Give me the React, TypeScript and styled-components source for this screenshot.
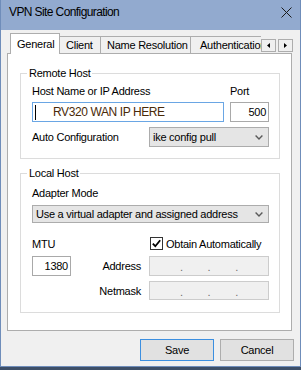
import React from 'react';
import styled, { createGlobalStyle } from 'styled-components';

const GlobalStyle = createGlobalStyle`
  html, body { margin: 0; padding: 0; }
  body {
    background: #3d4f68;
    font-family: "Liberation Sans", Arial, sans-serif;
    font-size: 11px;
    letter-spacing: -0.25px;
    color: #000;
  }
`;

// --- window chrome ---
const Window = styled.div`
  width: 301px;
  height: 367px;
  box-sizing: border-box;
  display: flex;
  flex-direction: column;
  background: #f0f0f0;
  border: 1px solid #6f8dba;
  border-top: none;
`;

const TitleBar = styled.div`
  height: 30px;
  flex-shrink: 0;
  display: flex;
  align-items: flex-start;
  background: #92aacf;
`;

const TitleText = styled.div`
  padding: 5px 0 0 8px;
  font-size: 12px;
  line-height: 14px;
  letter-spacing: -0.6px;
`;

const CloseIcon = styled.svg`
  margin: 7px 8px 0 auto;
  flex-shrink: 0;
`;

const Body = styled.div`
  flex: 1;
  display: flex;
  flex-direction: column;
  padding: 3px 0 0 6px;
`;

// --- tabs ---
const TabStrip = styled.div`
  display: flex;
  width: 286px;
  height: 21px;
  position: relative;
  z-index: 1;
  margin-bottom: -1px;
`;

const TabList = styled.div`
  flex: 1;
  min-width: 0;
  display: flex;
  align-items: flex-end;
  overflow: hidden;
  padding-left: 3px;
`;

const Tab = styled.div<{ $active?: boolean; $w: number; $pad: number }>`
  flex-shrink: 0;
  box-sizing: border-box;
  width: ${p => p.$w}px;
  height: ${p => (p.$active ? 21 : 17)}px;
  margin-bottom: ${p => (p.$active ? 0 : 1)}px;
  border: 1px solid #adadad;
  border-bottom: none;
  background: ${p => (p.$active ? '#ffffff' : '#f0f0f0')};
  display: flex;
  align-items: center;
  padding-left: ${p => p.$pad}px;
  white-space: nowrap;
  & + & { margin-left: -1px; }
`;

const Arrows = styled.div`
  display: flex;
  gap: 2px;
  margin-top: 6px;
  align-self: flex-start;
`;

const ArrowButton = styled.div`
  width: 15px;
  height: 13px;
  box-sizing: border-box;
  border: 1px solid #adadad;
  background: #f0f0f0;
  display: flex;
  align-items: center;
  justify-content: center;
`;

const Panel = styled.div`
  width: 285px;
  height: 278px;
  box-sizing: border-box;
  border: 1px solid #adadad;
  background: #ffffff;
  padding: 12px 11px 0 12px;
  display: flex;
  flex-direction: column;
  gap: 7px;
`;

// --- group boxes ---
const Group = styled.fieldset`
  margin: 0;
  padding: 0;
  min-width: 0;
  border: 1px solid #dcdcdc;
`;

const Legend = styled.legend`
  margin-left: 6px;
  padding: 0 2px;
  line-height: 14px;
`;

const GroupBody = styled.div<{ $top: number; $bottom: number }>`
  display: flex;
  flex-direction: column;
  padding: ${p => p.$top}px 10px ${p => p.$bottom}px 11px;
`;

const Label = styled.div`
  line-height: 14px;
  white-space: nowrap;
`;

const FieldRow = styled.div`
  display: flex;
  gap: 6px;
`;

const FieldColumn = styled.div<{ $w?: number }>`
  display: flex;
  flex-direction: column;
  gap: 4px;
  ${p => (p.$w ? `width: ${p.$w}px; flex-shrink: 0;` : 'flex: 1;')}
`;

const TextBox = styled.div<{ $focus?: boolean; $right?: boolean }>`
  height: 20px;
  box-sizing: border-box;
  border: 1px solid ${p => (p.$focus ? '#6aa6e4' : '#a9a9a9')};
  background: #ffffff;
  display: flex;
  align-items: center;
  justify-content: ${p => (p.$right ? 'flex-end' : 'flex-start')};
  padding: 0 2px;
  line-height: 14px;
`;

const Caret = styled.span`
  width: 1px;
  height: 15px;
  background: #000;
  flex-shrink: 0;
`;

const HostText = styled.span`
  margin-left: 17px;
  font-size: 12px;
  letter-spacing: -0.4px;
  color: #4a2a08;
  white-space: nowrap;
`;

const OptionRow = styled.div`
  display: flex;
  align-items: center;
  justify-content: space-between;
  margin-top: 5px;
`;

const Select = styled.div<{ $w?: number; $h: number; $gap?: number }>`
  ${p => (p.$w ? `width: ${p.$w}px;` : '')}
  height: ${p => p.$h}px;
  margin-top: ${p => p.$gap ?? 0}px;
  box-sizing: border-box;
  border: 1px solid #acacac;
  background: #e5e5e5;
  display: flex;
  align-items: center;
  justify-content: space-between;
  padding: 0 5px 0 3px;
  white-space: nowrap;
`;

const LocalGrid = styled.div`
  display: grid;
  grid-template-columns: 39px 62px 120px;
  grid-template-rows: 15px 20px 19px;
  column-gap: 8px;
  row-gap: 5px;
  margin-top: 13px;
  align-items: center;
`;

const RightLabel = styled(Label)`
  justify-self: end;
`;

const CheckRow = styled.div`
  display: flex;
  align-items: center;
  gap: 3px;
  margin-left: 1px;
  white-space: nowrap;
`;

const IpBox = styled.div<{ $h: number }>`
  height: ${p => p.$h}px;
  box-sizing: border-box;
  border: 1px solid #cccccc;
  background: #f0f0f0;
  display: flex;
  align-items: center;
  justify-content: space-between;
  padding: 2px 30px 0 30px;
  color: #6d6d6d;
`;

// --- dialog buttons ---
const ButtonRow = styled.div`
  display: flex;
  justify-content: flex-end;
  gap: 6px;
  padding: 8px 6px 0 0;
`;

const Button = styled.button<{ $primary?: boolean }>`
  width: 74px;
  height: 22px;
  box-sizing: border-box;
  border: 1px solid ${p => (p.$primary ? '#3c8fe0' : '#adadad')};
  background: #e1e1e1;
  font-family: inherit;
  font-size: 11px;
  letter-spacing: -0.25px;
  color: #000;
  padding: 0;
`;

const Chevron = () => (
  <svg width="8" height="5" viewBox="0 0 8 5">
    <polyline points="0.6,0.6 4,4 7.4,0.6" fill="none" stroke="#5a5a5a" strokeWidth="1.4" />
  </svg>
);

const IpDots = ({ h }: { h: number }) => (
  <IpBox $h={h}>
    <span>.</span>
    <span>.</span>
    <span>.</span>
  </IpBox>
);

const tabs = [
  { label: 'General', w: 50, pad: 6, active: true },
  { label: 'Client', w: 42, pad: 6 },
  { label: 'Name Resolution', w: 91, pad: 6 },
  { label: 'Authentication', w: 95, pad: 9 },
];

export default function App() {
  return (
    <>
      <GlobalStyle />
      <Window>
        <TitleBar>
          <TitleText>VPN Site Configuration</TitleText>
          <CloseIcon width="11" height="11" viewBox="0 0 11 11">
            <path d="M0.5 0.5 L10.5 10.5 M10.5 0.5 L0.5 10.5" stroke="#1a1a1a" strokeWidth="1" />
          </CloseIcon>
        </TitleBar>

        <Body>
          <TabStrip>
            <TabList>
              {tabs.map(t => (
                <Tab key={t.label} $w={t.w} $pad={t.pad} $active={t.active}>{t.label}</Tab>
              ))}
            </TabList>
            <Arrows>
              <ArrowButton>
                <svg width="3" height="5" viewBox="0 0 3 5"><polygon points="3,0 0,2.5 3,5" fill="#000" /></svg>
              </ArrowButton>
              <ArrowButton>
                <svg width="3" height="5" viewBox="0 0 3 5"><polygon points="0,0 3,2.5 0,5" fill="#000" /></svg>
              </ArrowButton>
            </Arrows>
          </TabStrip>

          <Panel>
            <Group>
              <Legend>Remote Host</Legend>
              <GroupBody $top={4} $bottom={11}>
                <FieldRow>
                  <FieldColumn>
                    <Label>Host Name or IP Address</Label>
                    <TextBox $focus>
                      <Caret />
                      <HostText>RV320 WAN IP HERE</HostText>
                    </TextBox>
                  </FieldColumn>
                  <FieldColumn $w={39}>
                    <Label>Port</Label>
                    <TextBox $right>500</TextBox>
                  </FieldColumn>
                </FieldRow>
                <OptionRow>
                  <Label>Auto Configuration</Label>
                  <Select $w={120} $h={20}>
                    <span>ike config pull</span>
                    <Chevron />
                  </Select>
                </OptionRow>
              </GroupBody>
            </Group>

            <Group>
              <Legend>Local Host</Legend>
              <GroupBody $top={6} $bottom={12}>
                <Label>Adapter Mode</Label>
                <Select $h={18} $gap={5}>
                  <span>Use a virtual adapter and assigned address</span>
                  <Chevron />
                </Select>
                <LocalGrid>
                  <Label>MTU</Label>
                  <span />
                  <CheckRow>
                    <svg width="13" height="13" viewBox="0 0 13 13">
                      <rect x="0.5" y="0.5" width="12" height="12" fill="#fff" stroke="#333" />
                      <path d="M2.8 6.6 L5.3 9.2 L10.2 3.2" fill="none" stroke="#000" strokeWidth="1.8" />
                    </svg>
                    <span>Obtain Automatically</span>
                  </CheckRow>

                  <TextBox $right>1380</TextBox>
                  <RightLabel>Address</RightLabel>
                  <IpDots h={20} />

                  <span />
                  <RightLabel>Netmask</RightLabel>
                  <IpDots h={19} />
                </LocalGrid>
              </GroupBody>
            </Group>
          </Panel>

          <ButtonRow>
            <Button $primary>Save</Button>
            <Button>Cancel</Button>
          </ButtonRow>
        </Body>
      </Window>
    </>
  );
}
